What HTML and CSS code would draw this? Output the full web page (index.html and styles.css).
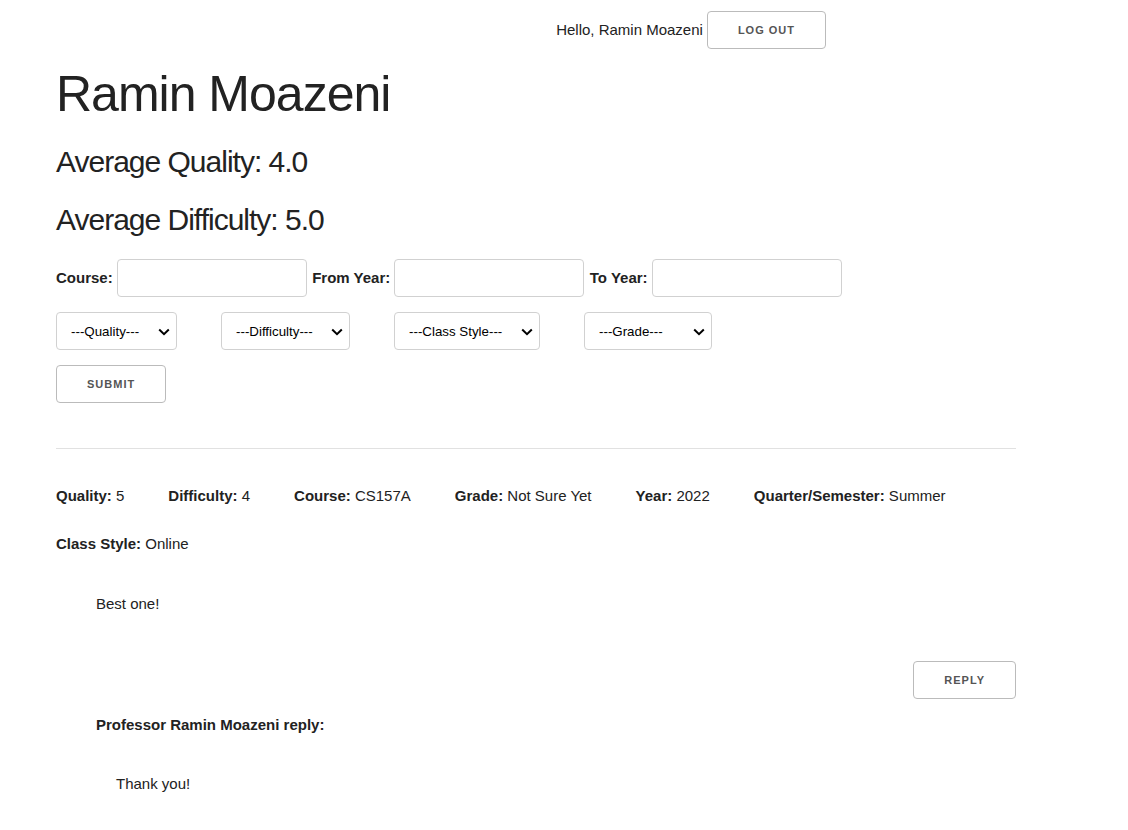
FILE: index.html
```html
<!DOCTYPE html>
<html lang="en">
<head>
<meta charset="utf-8">
<title>Ramin Moazeni</title>
<link rel="stylesheet" href="styles.css">
</head>
<body>
<div class="page">
  <div class="topbar">
    <span class="hello">Hello, Ramin Moazeni</span>
    <button class="button" type="button">Log out</button>
  </div>

  <h1 class="prof-name">Ramin Moazeni</h1>
  <h4 class="stat">Average Quality: 4.0</h4>
  <h4 class="stat">Average Difficulty: 5.0</h4>

  <form class="filters">
    <div class="filter-row">
      <label class="flabel" for="course">Course:</label>
      <input class="tinput" id="course" type="text">
      <label class="flabel" for="fromyear">From Year:</label>
      <input class="tinput" id="fromyear" type="text">
      <label class="flabel" for="toyear">To Year:</label>
      <input class="tinput" id="toyear" type="text">
    </div>
    <div class="select-row">
      <span class="sel-wrap">
        <select class="sel sel-quality"><option>---Quality---</option></select>
        <svg class="chev" width="12" height="8" viewBox="0 0 12 8"><path d="M1.2 1.5 L6 6.2 L10.8 1.5" fill="none" stroke="#000" stroke-width="2"/></svg>
      </span>
      <span class="sel-wrap">
        <select class="sel sel-difficulty"><option>---Difficulty---</option></select>
        <svg class="chev" width="12" height="8" viewBox="0 0 12 8"><path d="M1.2 1.5 L6 6.2 L10.8 1.5" fill="none" stroke="#000" stroke-width="2"/></svg>
      </span>
      <span class="sel-wrap">
        <select class="sel sel-style"><option>---Class Style---</option></select>
        <svg class="chev" width="12" height="8" viewBox="0 0 12 8"><path d="M1.2 1.5 L6 6.2 L10.8 1.5" fill="none" stroke="#000" stroke-width="2"/></svg>
      </span>
      <span class="sel-wrap">
        <select class="sel sel-grade"><option>---Grade---</option></select>
        <svg class="chev" width="12" height="8" viewBox="0 0 12 8"><path d="M1.2 1.5 L6 6.2 L10.8 1.5" fill="none" stroke="#000" stroke-width="2"/></svg>
      </span>
    </div>
    <button class="button" type="submit">Submit</button>
  </form>

  <hr class="divider">

  <div class="review">
    <div class="details">
      <span class="item"><b>Quality:</b> 5</span>
      <span class="item"><b>Difficulty:</b> 4</span>
      <span class="item"><b>Course:</b> CS157A</span>
      <span class="item"><b>Grade:</b> Not Sure Yet</span>
      <span class="item"><b>Year:</b> 2022</span>
      <span class="item"><b>Quarter/Semester:</b> Summer</span>
      <span class="item"><b>Class Style:</b> Online</span>
    </div>
    <div class="comment">
      <p class="comment-text">Best one!</p>
      <div class="reply-row">
        <button class="button" type="button">Reply</button>
      </div>
      <p class="reply-head">Professor Ramin Moazeni reply:</p>
      <p class="reply-text">Thank you!</p>
    </div>
  </div>
</div>
</body>
</html>
```

FILE: styles.css
```css
html, body {
  margin: 0;
  padding: 0;
  background: #fff;
}

body {
  font-family: "Liberation Sans", Arial, Helvetica, sans-serif;
  font-size: 15px;
  line-height: 24px;
  color: #222;
}

.page {
  width: 960px;
  margin-left: 56px;
  padding-top: 11px;
}

.topbar {
  display: flex;
  justify-content: flex-end;
  align-items: center;
  gap: 4px;
  margin-right: 190px;
}

.button {
  display: inline-block;
  box-sizing: border-box;
  height: 38px;
  padding: 0 30px;
  margin: 0;
  font-family: "Liberation Sans", Arial, sans-serif;
  font-size: 11px;
  font-weight: 700;
  line-height: 36px;
  letter-spacing: 1px;
  text-transform: uppercase;
  color: #555;
  background: transparent;
  border: 1px solid #bbb;
  border-radius: 4px;
  white-space: nowrap;
  cursor: pointer;
}

.prof-name {
  margin: 15px 0 19px;
  font-size: 50px;
  line-height: 60px;
  font-weight: 400;
  letter-spacing: -1px;
}

.stat {
  margin: 0 0 20px;
  font-size: 30px;
  line-height: 38px;
  font-weight: 400;
  letter-spacing: -1px;
}

.filters {
  margin: 0;
}

.filter-row {
  display: flex;
  align-items: center;
  gap: 4px;
  margin-bottom: 15px;
}

.flabel {
  font-weight: 700;
}

.flabel + .tinput + .flabel {
  margin-left: 1.5px;
}

.tinput {
  box-sizing: border-box;
  width: 190px;
  height: 38px;
  padding: 6px 10px;
  margin: 0;
  font-family: "Liberation Sans", Arial, sans-serif;
  font-size: 13.333px;
  background: #fff;
  border: 1px solid #d1d1d1;
  border-radius: 4px;
}

.select-row {
  display: flex;
  gap: 44px;
  margin-bottom: 15px;
}

.sel-wrap {
  position: relative;
  display: block;
}

.sel {
  -webkit-appearance: none;
  appearance: none;
  display: block;
  box-sizing: border-box;
  height: 38px;
  padding: 6px 24px 6px 14px;
  margin: 0;
  font-family: "Liberation Sans", Arial, sans-serif;
  font-size: 13.333px;
  color: #000;
  background: #fff;
  border: 1px solid #d1d1d1;
  border-radius: 4px;
}

.chev {
  position: absolute;
  right: 7px;
  top: 16px;
  pointer-events: none;
}

.sel-quality { width: 121px; }
.sel-difficulty { width: 129px; }
.sel-style { width: 146px; }
.sel-grade { width: 128px; }

.divider {
  margin: 45px 0 35px;
  border: 0;
  border-top: 1px solid #e1e1e1;
  height: 0;
}

.details {
  display: flex;
  flex-wrap: wrap;
  column-gap: 44px;
  row-gap: 24px;
}

.item b {
  font-weight: 700;
}

.comment {
  padding-left: 40px;
}

.comment-text {
  margin: 36px 0 0;
}

.reply-row {
  display: flex;
  justify-content: flex-end;
  margin-top: 45px;
}

.reply-head {
  margin: 14px 0 0;
  font-weight: 700;
}

.reply-text {
  margin: 35px 0 0;
  padding-left: 20px;
}
```
